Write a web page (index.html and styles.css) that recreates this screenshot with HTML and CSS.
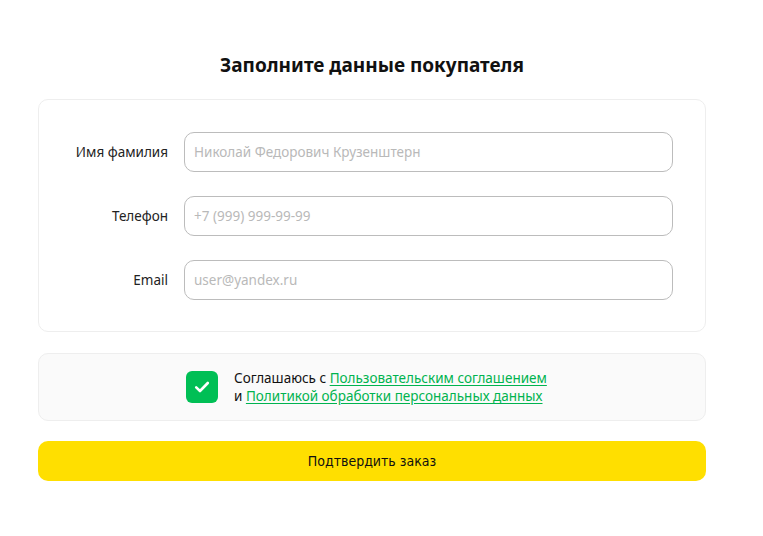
FILE: index.html
```html
<!DOCTYPE html>
<html lang="ru">
<head>
<meta charset="utf-8">
<title>Оформление заказа</title>
<link rel="stylesheet" href="styles.css">
</head>
<body>
<main class="checkout">
  <h1 class="checkout__title">Заполните данные покупателя</h1>

  <section class="card">
    <div class="field">
      <label class="field__label" for="name">Имя фамилия</label>
      <input class="field__input" id="name" type="text" placeholder="Николай Федорович Крузенштерн">
    </div>
    <div class="field">
      <label class="field__label" for="phone">Телефон</label>
      <input class="field__input" id="phone" type="tel" placeholder="+7 (999) 999-99-99">
    </div>
    <div class="field">
      <label class="field__label" for="email">Email</label>
      <input class="field__input" id="email" type="email" placeholder="user@yandex.ru">
    </div>
  </section>

  <section class="agree">
    <span class="agree__box">
      <svg width="32" height="32" viewBox="0 0 32 32" fill="none">
        <path d="M10.2 16.4 L14 20 L21.8 12" stroke="#fff" stroke-width="2.6" stroke-linecap="round" stroke-linejoin="round"/>
      </svg>
    </span>
    <p class="agree__text">Соглашаюсь с <a href="#" class="agree__link">Пользовательским соглашением</a><br>и <a href="#" class="agree__link">Политикой обработки персональных данных</a></p>
  </section>

  <button class="submit" type="button">Подтвердить заказ</button>
</main>
</body>
</html>
```

FILE: styles.css
```css
* {
  box-sizing: border-box;
}

body {
  margin: 0;
  background: #fff;
  font-family: "Noto Sans", "DejaVu Sans", sans-serif;
  color: #1f1f1f;
}

.checkout {
  width: 668px;
  margin-left: 38px;
  padding-top: 51px;
}

.checkout__title {
  margin: 0 0 20px;
  text-align: center;
  font-size: 19px;
  line-height: 28px;
  font-weight: 700;
  color: #111;
}

.card {
  border: 1px solid #eeeeee;
  border-radius: 10px;
  padding: 32px 32px 31px 0;
  display: flex;
  flex-direction: column;
  gap: 24px;
}

.field {
  display: flex;
  align-items: center;
  gap: 16px;
}

.field__label {
  width: 129px;
  text-align: right;
  font-size: 13.5px;
  color: #222;
}

.field__input {
  flex: 1;
  height: 40px;
  border: 1px solid #bcbcbc;
  border-radius: 10px;
  padding: 0 9px;
  font-family: inherit;
  font-size: 13.5px;
  color: #222;
  background: #fff;
  outline: none;
}

.field__input::placeholder {
  color: #b9b9b9;
}

.agree {
  margin-top: 21px;
  height: 68px;
  background: #fafafa;
  border: 1px solid #eeeeee;
  border-radius: 10px;
  display: flex;
  align-items: center;
  padding-left: 147px;
  gap: 16px;
}

.agree__box {
  width: 32px;
  height: 32px;
  border-radius: 6px;
  background: #00bf55;
  display: flex;
  align-items: center;
  justify-content: center;
  flex: none;
}

.agree__text {
  margin: 0;
  font-size: 13.5px;
  line-height: 18px;
  color: #111;
}

.agree__link {
  color: #00b34f;
  text-decoration: underline;
  text-underline-offset: 2px;
}

.submit {
  display: block;
  width: 100%;
  margin-top: 20px;
  height: 40px;
  border: none;
  border-radius: 10px;
  background: #ffdf00;
  font-family: "DejaVu Sans Condensed", "Liberation Sans Narrow", sans-serif;
  font-size: 14px;
  color: #111;
  cursor: pointer;
}
```
